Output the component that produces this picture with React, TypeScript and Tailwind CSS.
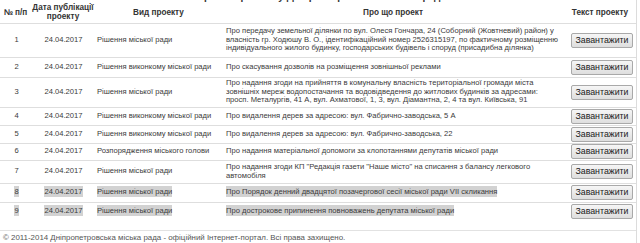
import React from "react";

interface Row {
  n: string;
  kind: string;
  about: string[];
  h: string;
  marked?: boolean;
}

const ROWS: Row[] = [
  {
    n: "1",
    kind: "Рішення міської ради",
    about: [
      "Про передачу земельної ділянки по вул. Олеся Гончара, 24 (Соборний (Жовтневий) район) у",
      "власність гр. Ходюшу В. О., ідентифікаційний номер 2526315197, по фактичному розміщенню",
      "індивідуального жилого будинку, господарських будівель і споруд (присадибна ділянка)",
    ],
    h: "h-[34px]",
  },
  {
    n: "2",
    kind: "Рішення виконкому міської ради",
    about: ["Про скасування дозволів на розміщення зовнішньої реклами"],
    h: "h-[20px]",
  },
  {
    n: "3",
    kind: "Рішення міської ради",
    about: [
      "Про надання згоди на прийняття в комунальну власність територіальної громади міста",
      "зовнішніх мереж водопостачання та водовідведення до житлових будинків за адресами:",
      "просп. Металургів, 41 А, вул. Ахматової, 1, 3, вул. Діамантна, 2, 4 та вул. Київська, 91",
    ],
    h: "h-[30px]",
  },
  {
    n: "4",
    kind: "Рішення виконкому міської ради",
    about: ["Про видалення дерев за адресою: вул. Фабрично-заводська, 5 А"],
    h: "h-[18px]",
  },
  {
    n: "5",
    kind: "Рішення виконкому міської ради",
    about: ["Про видалення дерев за адресою: вул. Фабрично-заводська, 22"],
    h: "h-[18px]",
  },
  {
    n: "6",
    kind: "Розпорядження міського голови",
    about: ["Про надання матеріальної допомоги за клопотаннями депутатів міської ради"],
    h: "h-[17px]",
  },
  {
    n: "7",
    kind: "Рішення міської ради",
    about: [
      "Про надання згоди КП \"Редакція газети \"Наше місто\" на списання з балансу легкового",
      "автомобіля",
    ],
    h: "h-[23px]",
  },
  {
    n: "8",
    kind: "Рішення міської ради",
    about: ["Про Порядок денний двадцятої позачергової сесії міської ради VII скликання"],
    h: "h-[19px]",
    marked: true,
  },
  {
    n: "9",
    kind: "Рішення міської ради",
    about: ["Про дострокове припинення повноважень депутата міської ради"],
    h: "h-[19px]",
    marked: true,
  },
];

function Mark({ on, children }: { on?: boolean; children: React.ReactNode }) {
  if (!on) return <>{children}</>;
  return <span className="bg-[#d2d2d2] py-[1px]">{children}</span>;
}

function DownloadButton() {
  return (
    <button className="h-[15px] w-[62px] rounded-[2px] border border-[#a9a9a9] bg-gradient-to-b from-[#f6f6f6] to-[#dedede] text-[8.8px] leading-[13px] text-[#222]">
      Завантажити
    </button>
  );
}

export default function App() {
  return (
    <div className="w-[640px] h-[243px] overflow-hidden bg-white font-['Liberation_Sans',Arial,sans-serif] text-[#3a3a3a]">
      <div className="w-[637px] border-r border-[#dcdcdc]">
        {/* heading above, scrolled out of view */}
        <div className="h-[2px] overflow-hidden text-center">
          <div className="-mt-[9px] text-[10px] leading-[11px] font-bold text-[#333] pl-[4px]">
            Проекти рішень у Дніпропетровській міській раді
          </div>
        </div>

        <table className="w-full table-fixed border-collapse text-[7.6px] leading-[8.6px]">
          <colgroup>
            <col className="w-[31px]" />
            <col className="w-[64px]" />
            <col className="w-[127px]" />
            <col />
            <col className="w-[72px]" />
          </colgroup>
          <thead>
            <tr className="h-[21px] border-b border-[#dedede] text-[8.2px] leading-[9px] text-[#333]">
              <th className="text-center font-bold">№ п/п</th>
              <th className="text-center font-bold">
                Дата публікації
                <br />
                проекту
              </th>
              <th className="text-center font-bold">Вид проекту</th>
              <th className="text-center font-bold">Про що проект</th>
              <th className="text-center font-bold">Текст проекту</th>
            </tr>
          </thead>
          <tbody>
            {ROWS.map((r, i) => (
              <tr
                key={r.n}
                className={`${r.h} ${i < ROWS.length - 1 ? "border-b border-[#dedede]" : ""}`}
              >
                <td className="text-center align-middle pl-[2px]">
                  <Mark on={r.marked}>{r.n}</Mark>
                </td>
                <td className="text-center align-middle pl-[1px]">
                  <Mark on={r.marked}>24.04.2017</Mark>
                </td>
                <td className="align-middle pl-[2px] whitespace-nowrap">
                  <Mark on={r.marked}>{r.kind}</Mark>
                </td>
                <td className="align-middle pl-[4px] whitespace-nowrap">
                  {r.about.map((line) => (
                    <div key={line}>
                      <Mark on={r.marked}>{line}</Mark>
                    </div>
                  ))}
                </td>
                <td className="align-middle text-right pr-[3px]">
                  <DownloadButton />
                </td>
              </tr>
            ))}
          </tbody>
        </table>

        <div className="h-[9px]" />
        <div className="border-t border-[#e2e2e2] pl-[3px] pt-[2px] h-[13px] text-[7.9px] leading-[10px] text-[#555]">
          © 2011-2014 Дніпропетровська міська рада - офіційний Інтернет-портал. Всі права захищено.
        </div>
      </div>
    </div>
  );
}
